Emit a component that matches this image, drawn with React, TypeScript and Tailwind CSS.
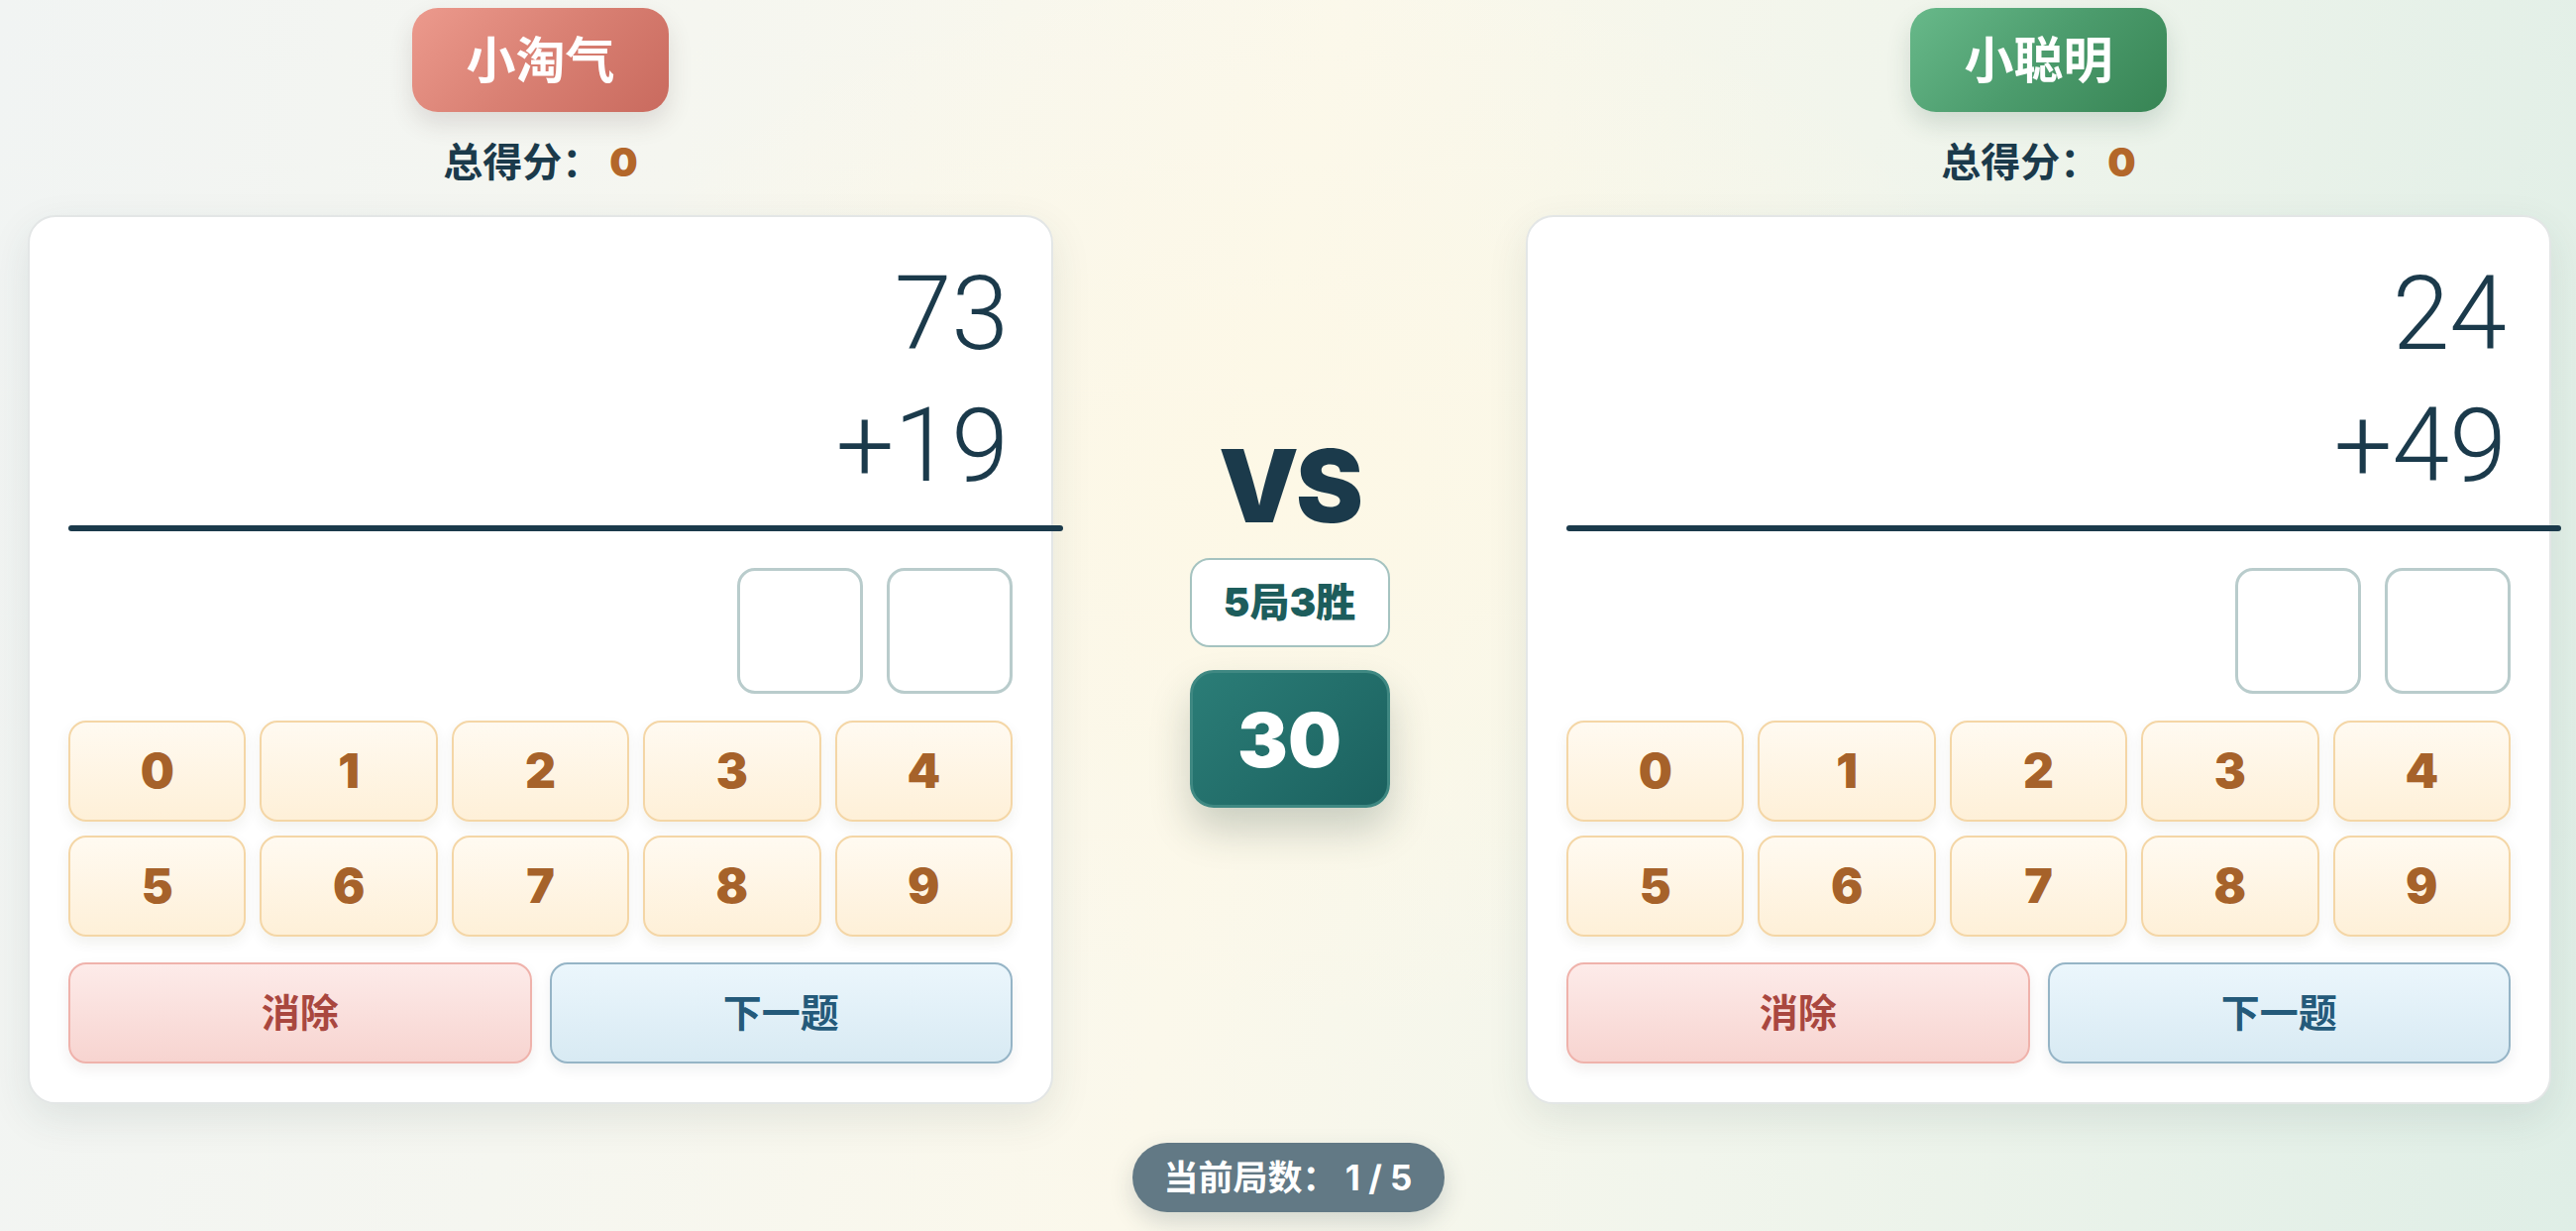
import React from "react";

const keys = ["0", "1", "2", "3", "4", "5", "6", "7", "8", "9"];

function PlayerColumn({
  name,
  badgeClass,
  top,
  bottom,
}: {
  name: string;
  badgeClass: string;
  top: string;
  bottom: string;
}) {
  return (
    <div className="w-[1035px] shrink-0 flex flex-col items-center pt-[8px]">
      <div
        className={`h-[105px] w-[259px] rounded-[26px] flex items-center justify-center text-white text-[50px] font-semibold leading-none ${badgeClass}`}
      >
        {name}
      </div>
      <div className="mt-[29px] h-[44px] leading-[44px] text-[40px] font-bold text-[#1b3a4b] flex items-center">
        <span>总得分：</span>
        <span className="ml-[8px] font-['Inter',sans-serif] font-black text-[#b3672a] text-[40px]">0</span>
      </div>
      <div className="mt-[31px] w-full h-[897px] rounded-[28px] border-2 border-[#e3e6e6] bg-white shadow-[0_14px_40px_rgba(40,70,70,0.10)] px-[39px] pt-[31px] flex flex-col">
        <div className="font-['Roboto',sans-serif] font-light text-[104px] leading-[133px] text-[#1b3a4b] text-right pr-[4px]">
          <div>{top}</div>
          <div>{bottom}</div>
        </div>
        <div className="mt-[14px] h-[6px] w-[1004px] rounded-full bg-[#1b3a4b]" />
        <div className="mt-[37px] flex justify-end gap-[24px]">
          <div className="w-[127px] h-[127px] rounded-[18px] border-[3px] border-[#b9cccc] bg-white" />
          <div className="w-[127px] h-[127px] rounded-[18px] border-[3px] border-[#b9cccc] bg-white" />
        </div>
        <div className="mt-[27px] grid grid-cols-5 gap-[14px]">
          {keys.map((k) => (
            <div
              key={k}
              className="h-[102px] rounded-[18px] border-2 border-[#f4d6a6] bg-[linear-gradient(180deg,#fffaf1_0%,#fef0d8_100%)] shadow-[0_6px_14px_rgba(60,50,20,0.07)] flex items-center justify-center font-['Inter',sans-serif] font-black text-[48px] text-[#a6622a]"
            >
              {k}
            </div>
          ))}
        </div>
        <div className="mt-[26px] grid grid-cols-2 gap-[18px]">
          <div className="h-[102px] rounded-[18px] border-2 border-[#efb2ab] bg-[linear-gradient(180deg,#fdebe9_0%,#f7d4d0_100%)] shadow-[0_6px_14px_rgba(60,30,20,0.07)] flex items-center justify-center text-[39px] font-bold text-[#a9473f]">
            消除
          </div>
          <div className="h-[102px] rounded-[18px] border-2 border-[#95b4c6] bg-[linear-gradient(180deg,#ebf6fc_0%,#d8eaf3_100%)] shadow-[0_6px_14px_rgba(20,40,60,0.07)] flex items-center justify-center text-[39px] font-bold text-[#245a7a]">
            下一题
          </div>
        </div>
      </div>
    </div>
  );
}

export default function App() {
  return (
    <div className="relative w-full h-[1242px] overflow-hidden font-['Inter','Noto_Sans_CJK_SC',sans-serif] bg-[radial-gradient(ellipse_30%_45%_at_50%_40%,#fdf8e6_0%,rgba(253,248,230,0)_100%),linear-gradient(100deg,#f1f4f3_0%,#f5f6f0_25%,#fbf8eb_48%,#f1f5ec_68%,#dfeee6_100%)]">
      <div className="flex pl-[28px] pr-[25px]">
        <PlayerColumn
          name="小淘气"
          badgeClass="bg-[linear-gradient(135deg,#ec9a8d_0%,#d98073_50%,#c96a5e_100%)] shadow-[0_12px_24px_rgba(80,60,60,0.14)]"
          top="73"
          bottom="+19"
        />
        <div className="w-[477px] shrink-0 flex flex-col items-center pt-[439px]">
          <div className="font-['Inter',sans-serif] font-black text-[102px] leading-[102px] text-[#1b3a4b] tracking-[-3px]">
            VS
          </div>
          <div className="mt-[22px] w-[202px] h-[90px] rounded-[20px] border-2 border-[#a5c3c0] bg-white flex items-center justify-center text-[40px] font-black text-[#1d5d5c]">
            5局3胜
          </div>
          <div className="mt-[23px] w-[202px] h-[139px] rounded-[24px] border-[3px] border-[#3f8882] bg-[linear-gradient(135deg,#2b7d77_0%,#1b615f_100%)] shadow-[0_22px_40px_rgba(30,60,50,0.22)] flex items-center justify-center font-['Inter',sans-serif] font-black text-[76px] text-white">
            30
          </div>
        </div>
        <PlayerColumn
          name="小聪明"
          badgeClass="bg-[linear-gradient(135deg,#68b98a_0%,#4c9c6d_50%,#378454_100%)] shadow-[0_12px_24px_rgba(40,80,60,0.16)]"
          top="24"
          bottom="+49"
        />
      </div>
      <div className="mt-[39px] flex justify-center">
        <div className="w-[315px] h-[70px] rounded-full bg-[#627985] shadow-[0_10px_24px_rgba(40,60,70,0.18)] flex items-center justify-center text-white text-[35px] font-bold whitespace-pre">
          当前局数： 1 / 5
        </div>
      </div>
    </div>
  );
}
